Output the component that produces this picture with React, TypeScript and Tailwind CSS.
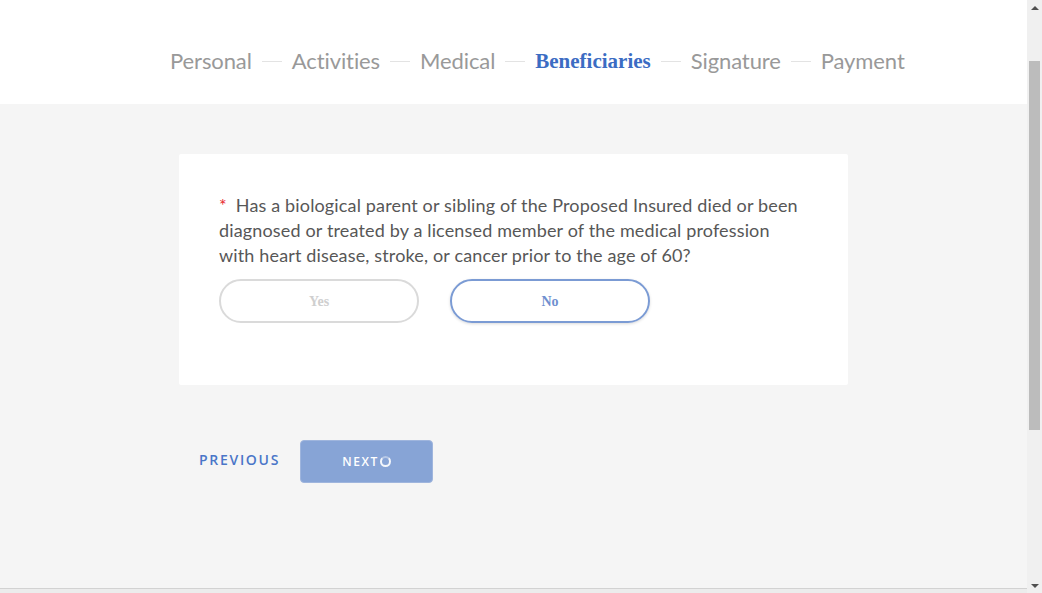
import { useState } from "react";

const steps = ["Personal", "Activities", "Medical", "Beneficiaries", "Signature", "Payment"];
const activeStep = "Beneficiaries";

function Scrollbar() {
    return (
        <div className="w-[15px] h-full bg-[#f0f0f0] flex flex-col items-center shrink-0">
            <div className="h-[15px] flex items-center justify-center">
                <div className="w-0 h-0 border-l-[4px] border-r-[4px] border-b-[4px] border-l-transparent border-r-transparent border-b-[#505050]" />
            </div>
            <div className="mt-[46px] w-[11px] h-[369px] bg-[#bcbcbc]" />
            <div className="flex-1" />
            <div className="h-[15px] flex items-center justify-center">
                <div className="w-0 h-0 border-l-[4px] border-r-[4px] border-t-[4px] border-l-transparent border-r-transparent border-t-[#505050]" />
            </div>
        </div>
    );
}

export default function App() {
    const [answer, setAnswer] = useState<"yes" | "no" | null>("no");

    const on =
        "w-[200px] h-[44px] rounded-full border-2 border-[#7b9bd4] text-[#6f8fcf] font-bold text-[14px] font-['Liberation_Serif',serif] shadow-[0_1px_3px_rgba(0,0,0,0.15)]";
    const off =
        "w-[200px] h-[44px] rounded-full border-2 border-[#dadada] text-[#cfcfcf] font-bold text-[14px] font-['Liberation_Serif',serif]";

    return (
        <div className="w-[1042px] h-[593px] flex overflow-hidden bg-[#f5f5f5]">
            <div className="flex-1 flex flex-col">
                {/* Steps header */}
                <header className="h-[104px] bg-white flex items-start pt-[46px] pl-[170px] font-['Lato',sans-serif]">
                    {steps.map((s, i) => (
                        <div key={s} className="flex items-center">
                            {i > 0 && <span className="mx-[10px] w-[20px] h-px bg-[#e3e3e3]" />}
                            {s === activeStep ? (
                                <span className="text-[21px] leading-[30px] font-bold text-[#3b6cc3] font-['Liberation_Serif',serif]">
                                    {s}
                                </span>
                            ) : (
                                <span className="text-[22px] leading-[30px] text-[#999999] tracking-[-0.1px]">{s}</span>
                            )}
                        </div>
                    ))}
                </header>

                <main className="flex-1 flex flex-col items-center pt-[50px]">
                    <div className="w-[669px]">
                        <section className="bg-white rounded-[2px] pl-[40px] pr-[44px] pt-[39px] pb-[62px]">
                            <p className="text-[18px] leading-[25px] text-[#575757] font-['Lato',sans-serif] tracking-[0.15px]">
                                <span className="inline-block text-[#e8262e] mr-[9px]">*</span>
                                Has a biological parent or sibling of the Proposed Insured died or been diagnosed or treated by
                                a licensed member of the medical profession with heart disease, stroke, or cancer prior to the age
                                of 60?
                            </p>
                            <div className="flex gap-[31px] mt-[11px]">
                                <button onClick={() => setAnswer("yes")} className={answer === "yes" ? on : off}>
                                    Yes
                                </button>
                                <button onClick={() => setAnswer("no")} className={answer === "no" ? on : off}>
                                    No
                                </button>
                            </div>
                        </section>

                        <div className="flex items-center mt-[55px] pl-[20px] font-['Open_Sans',sans-serif]">
                            <button className="text-[14px] font-semibold tracking-[1.7px] text-[#4a76c8] w-[101px] text-left -mt-[4px]">
                                PREVIOUS
                            </button>
                            <button className="w-[133px] h-[43px] rounded-[4px] bg-[#87a4d6] border border-[#9fb5dd] text-white text-[12px] font-semibold tracking-[1.5px] flex items-center justify-center">
                                NEXT
                                <span className="ml-[1px] w-[11px] h-[11px] rounded-full border-2 border-white/90 border-t-white/40" />
                            </button>
                        </div>
                    </div>
                </main>

                <div className="h-[5px] border-t border-[#d2d2d2] bg-[#ececec]" />
            </div>
            <Scrollbar />
        </div>
    );
}
